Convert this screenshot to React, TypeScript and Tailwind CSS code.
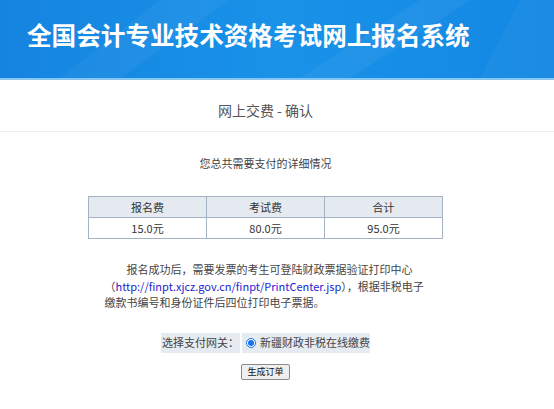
export default function App() {
  const fonts = { fontFamily: '"Noto Sans CJK SC", "Noto Sans", sans-serif' };
  return (
    <div className="min-h-[409px] w-full bg-white text-[#333]" style={fonts}>
      {/* header */}
      <header className="relative h-[80px] overflow-hidden border-b-2 border-[#86c6f3] bg-gradient-to-r from-[#1584e0] via-[#1992e8] to-[#1488e4]">
        <svg className="absolute inset-0 h-full w-full" viewBox="0 0 554 78" preserveAspectRatio="none">
          <polygon points="60,78 160,0 230,0 120,78" fill="#ffffff" opacity="0.04" />
          <polygon points="300,78 420,0 470,0 350,78" fill="#ffffff" opacity="0.05" />
          <polygon points="480,78 520,0 554,0 554,78" fill="#ffffff" opacity="0.03" />
        </svg>
        <h1 className="relative flex h-full items-center whitespace-nowrap pb-[9px] pl-[27px] text-[24.6px] font-bold leading-none text-white">
          全国会计专业技术资格考试网上报名系统
        </h1>
      </header>

      {/* section title */}
      <div className="flex h-[52px] items-center justify-center border-b border-[#ececec] pr-[23px] pt-[9px] text-[14px] text-[#555]">
        网上交费 - 确认
      </div>

      <main className="flex flex-col items-center pr-[23px]">
        <p className="mt-[24px] text-[11px] leading-[14px] text-[#444]">您总共需要支付的详细情况</p>

        <table className="mt-[26px] w-[355px] border-collapse text-center text-[11px] text-[#333]">
          <thead>
            <tr className="h-[21px] bg-[#e5eaf0]">
              <th className="border border-[#a3b3c4] font-normal">报名费</th>
              <th className="border border-[#a3b3c4] font-normal">考试费</th>
              <th className="border border-[#a3b3c4] font-normal">合计</th>
            </tr>
          </thead>
          <tbody>
            <tr className="h-[21px]">
              <td className="w-1/3 border border-[#a3b3c4]">15.0元</td>
              <td className="w-1/3 border border-[#a3b3c4]">80.0元</td>
              <td className="w-1/3 border border-[#a3b3c4]">95.0元</td>
            </tr>
          </tbody>
        </table>

        <p className="mt-[22px] w-[322px] indent-[22px] text-[11px] leading-[16.5px] text-[#444]">
          报名成功后，需要发票的考生可登陆财政票据验证打印中心（<a className="text-[#2323d0]">http://finpt.xjcz.gov.cn/finpt/PrintCenter.jsp</a>），根据非税电子缴款书编号和身份证件后四位打印电子票据。
        </p>

        <div className="mt-[22px] flex h-[20px] gap-[2px] text-[11px] text-[#444]">
          <div className="flex items-center bg-[#e6ebf1] px-[1px]">选择支付网关：</div>
          <div className="flex items-center gap-[4px] bg-[#e6ebf1] pl-[4px]">
            <span className="flex h-[10px] w-[10px] items-center justify-center rounded-full border border-[#1a73e8] bg-white">
              <span className="h-[6px] w-[6px] rounded-full bg-[#1a73e8]" />
            </span>
            新疆财政非税在线缴费
          </div>
        </div>

        <button className="mt-[11px] h-[16px] rounded-[2px] border border-[#8a8a8a] bg-[#efefef] px-[5px] text-[9px] leading-none text-[#111]">
          生成订单
        </button>
      </main>
    </div>
  );
}
